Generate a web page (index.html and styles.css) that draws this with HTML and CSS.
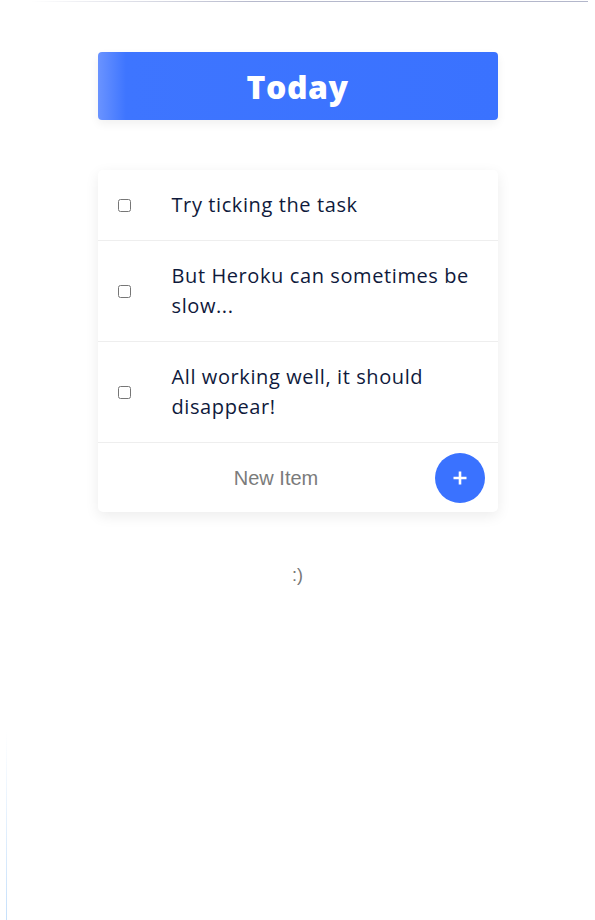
FILE: index.html
```html
<!DOCTYPE html>
<html lang="en">
<head>
<meta charset="utf-8">
<title>To Do List</title>
<link rel="stylesheet" href="styles.css">
</head>
<body>
<div class="topline"></div>
<div class="sideline"></div>
<main class="page">
  <div class="heading"><h1>Today</h1></div>
  <div class="box">
    <form class="item"><input type="checkbox"><p>Try ticking the task</p></form>
    <form class="item"><input type="checkbox"><p>But Heroku can sometimes be slow...</p></form>
    <form class="item"><input type="checkbox"><p>All working well, it should disappear!</p></form>
    <form class="item newitem">
      <input type="text" placeholder="New Item" class="newinput">
      <button type="button" class="add">
        <svg width="16" height="16" viewBox="0 0 16 16"><path d="M8 1.5v13M1.5 8h13" stroke="#fff" stroke-width="2.6" fill="none"/></svg>
      </button>
    </form>
  </div>
  <footer class="smile">:)</footer>
</main>
</body>
</html>
```
FILE: styles.css
```css
html, body {
  margin: 0;
  padding: 0;
  background: #fff;
  height: 920px;
  overflow: hidden;
}
body {
  position: relative;
  font-family: "Open Sans", "Noto Sans", sans-serif;
}
.topline {
  position: absolute;
  top: 1px;
  left: 30px;
  width: 558px;
  height: 1px;
  background: linear-gradient(to right, rgba(200,190,210,0), #b6b9cc 40%, #b3b7cb);
}
.sideline {
  position: absolute;
  left: 6px;
  top: 730px;
  width: 1px;
  height: 190px;
  background: linear-gradient(to bottom, rgba(205,228,251,0), #c6e0fb);
}
.page {
  width: 400px;
  margin: 0 auto;
  padding-top: 52px;
}
.heading {
  height: 68px;
  border-radius: 4px;
  background: linear-gradient(to right, #6a93ff 0px, #3e75ff 28px, #3a72ff 100%);
  box-shadow: 0 4px 10px rgba(0,0,0,0.06);
  display: flex;
  align-items: center;
  justify-content: center;
}
.heading h1 {
  margin: 0;
  color: #fff;
  font-family: "Open Sans", sans-serif;
  font-weight: 800;
  font-size: 32px;
  letter-spacing: 0.5px;
}
.box {
  margin-top: 50px;
  background: #fff;
  border-radius: 5px;
  box-shadow: 0 4px 14px rgba(0,0,0,0.08);
}
.item {
  display: flex;
  align-items: center;
  min-height: 70px;
  border-bottom: 1px solid #eeeeee;
  margin: 0;
}
.item input[type="checkbox"] {
  margin: 0 0 0 20px;
  width: 13px;
  height: 13px;
  flex: none;
}
.item p {
  margin: 0;
  padding: 20px 18px 20px 41px;
  font-size: 20px;
  line-height: 30px;
  letter-spacing: 0.6px;
  color: #0f1a3c;
  font-weight: 400;
}
.newitem {
  border-bottom: none;
  height: 69px;
  min-height: 0;
}
.newinput {
  flex: 1;
  border: none;
  outline: none;
  background: transparent;
  text-align: center;
  font-family: "Liberation Sans", Arial, sans-serif;
  font-size: 20px;
  color: #333;
  margin-left: 20px;
  padding: 0;
  height: 40px;
  position: relative;
  top: 1px;
}
.newinput::placeholder {
  color: #7b7b7b;
}
.add {
  width: 50px;
  height: 50px;
  border-radius: 50%;
  background: #3a72ff;
  border: none;
  margin: 0 13px 0 0;
  padding: 0;
  display: flex;
  align-items: center;
  justify-content: center;
  flex: none;
}
.smile {
  text-align: center;
  margin-top: 53px;
  font-family: "Liberation Sans", Arial, sans-serif;
  font-size: 18px;
  color: #777;
}
```
